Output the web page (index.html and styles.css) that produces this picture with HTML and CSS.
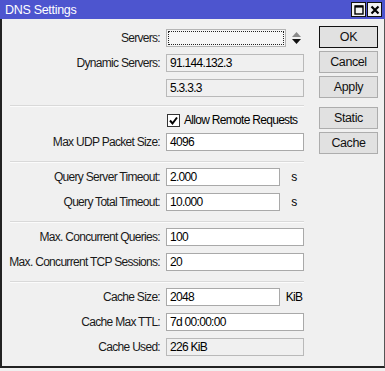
FILE: index.html
```html
<!DOCTYPE html>
<html lang="en">
<head>
    <meta charset="UTF-8">
    <title>DNS Settings</title>
    <link rel="stylesheet" href="styles.css">
</head>
<body>
    <div class="window">
        <div class="titlebar">
            <span class="title">DNS Settings</span>
            <div class="winbtns">
                <span class="winbtn">
                    <svg width="10" height="10" viewBox="0 0 10 10"><rect x="1" y="1" width="8" height="8" fill="none" stroke="#000" stroke-width="1.4"/><line x1="1" y1="1.6" x2="9" y2="1.6" stroke="#000" stroke-width="2"/></svg>
                </span>
                <span class="winbtn">
                    <svg width="10" height="10" viewBox="0 0 10 10"><path d="M1.5 1.5 L8.5 8.5 M8.5 1.5 L1.5 8.5" stroke="#000" stroke-width="2.2"/></svg>
                </span>
            </div>
        </div>

        <div class="frame">
            <div class="form">
                <div class="section">
                    <div class="row">
                        <label>Servers:</label>
                        <div class="field">
                            <div class="select"><div class="focus"></div></div>
                            <svg class="spin" width="11" height="15" viewBox="0 0 11 15"><path d="M5.5 1 L10 6 L1 6 Z" fill="#8a8a8a"/><path d="M1 8 L10 8 L5.5 13 Z" fill="#111"/></svg>
                        </div>
                    </div>
                    <div class="row">
                        <label>Dynamic Servers:</label>
                        <div class="field"><div class="input disabled">91.144.132.3</div></div>
                    </div>
                    <div class="row">
                        <label></label>
                        <div class="field"><div class="input disabled">5.3.3.3</div></div>
                    </div>
                </div>

                <div class="sep first"></div>

                <div class="section">
                    <div class="row short">
                        <label></label>
                        <div class="field check">
                            <svg class="box" width="13" height="13" viewBox="0 0 13 13"><rect x="0.5" y="0.5" width="12" height="12" fill="#fff" stroke="#333"/><path d="M3 6.5 L5.5 9.5 L10 3.5" fill="none" stroke="#000" stroke-width="2"/></svg>
                            <span>Allow Remote Requests</span>
                        </div>
                    </div>
                    <div class="row">
                        <label>Max UDP Packet Size:</label>
                        <div class="field"><div class="input">4096</div></div>
                    </div>
                </div>

                <div class="sep"></div>

                <div class="section">
                    <div class="row">
                        <label>Query Server Timeout:</label>
                        <div class="field"><div class="input narrow">2.000</div><span class="unit">s</span></div>
                    </div>
                    <div class="row">
                        <label>Query Total Timeout:</label>
                        <div class="field"><div class="input narrow">10.000</div><span class="unit">s</span></div>
                    </div>
                </div>

                <div class="sep"></div>

                <div class="section">
                    <div class="row">
                        <label>Max. Concurrent Queries:</label>
                        <div class="field"><div class="input">100</div></div>
                    </div>
                    <div class="row">
                        <label>Max. Concurrent TCP Sessions:</label>
                        <div class="field"><div class="input">20</div></div>
                    </div>
                </div>

                <div class="sep"></div>

                <div class="section">
                    <div class="row">
                        <label>Cache Size:</label>
                        <div class="field"><div class="input narrow">2048</div><span class="unit">KiB</span></div>
                    </div>
                    <div class="row">
                        <label>Cache Max TTL:</label>
                        <div class="field"><div class="input">7d 00:00:00</div></div>
                    </div>
                    <div class="row">
                        <label>Cache Used:</label>
                        <div class="field"><div class="input disabled">226 KiB</div></div>
                    </div>
                </div>
            </div>

            <div class="buttons">
                <div class="group">
                    <button class="default">OK</button>
                    <button>Cancel</button>
                    <button>Apply</button>
                </div>
                <div class="group">
                    <button>Static</button>
                    <button>Cache</button>
                </div>
            </div>
        </div>
    </div>
</body>
</html>
```

FILE: styles.css
```css
html, body {
    margin: 0;
    background: #f0f0f0;
}
body {
    font-family: "Liberation Sans", Arial, sans-serif;
    font-size: 12px;
    letter-spacing: -0.7px;
    color: #000;
}
.window {
    width: 385px;
    height: 368px;
    display: flex;
    flex-direction: column;
}
.titlebar {
    height: 19px;
    background: #4d55cf;
    display: flex;
    align-items: center;
    justify-content: space-between;
    padding: 0 3px 0 5px;
    flex-shrink: 0;
}
.title {
    color: #fff;
    font-size: 12.5px;
    letter-spacing: -0.3px;
    padding-top: 1px;
}
.winbtns {
    display: flex;
    gap: 1px;
}
.winbtn {
    width: 13px;
    height: 13px;
    background: #f2f2f2;
    border: 1px solid #111;
    display: flex;
    align-items: center;
    justify-content: center;
}
.frame {
    flex: 1;
    display: flex;
    border-left: 2px solid #222;
    border-bottom: 2px solid #222;
    border-right: 1px solid #555;
}
.form {
    padding-top: 10px;
    width: 302px;
}
.section {
    display: flex;
    flex-direction: column;
    gap: 7px;
}
.row {
    display: grid;
    grid-template-columns: 158px 138px;
    column-gap: 6px;
    height: 18px;
    align-items: center;
}
.row.short {
    height: 13px;
}
.row label {
    text-align: right;
    white-space: nowrap;
    color: #1a1a1a;
}
.field {
    display: flex;
    align-items: center;
    height: 100%;
    white-space: nowrap;
}
.input {
    box-sizing: border-box;
    width: 138px;
    height: 18px;
    line-height: 16px;
    padding-left: 3px;
    background: #fff;
    border: 1px solid #a9a9a9;
    white-space: nowrap;
}
.input.narrow {
    width: 114px;
}
.input.disabled {
    background: #f0f0f0;
    border-color: #b9b9b9;
}
.unit {
    flex: 1;
    text-align: center;
    padding-left: 4px;
}
.select {
    box-sizing: border-box;
    width: 120px;
    height: 18px;
    border: 1px solid #b4b4b4;
    background: #f6f6f6;
    padding: 1px;
}
.focus {
    height: 100%;
    box-sizing: border-box;
    border: 1px dotted #222;
}
.spin {
    margin-left: 5px;
}
.check {
    gap: 4px;
    padding-left: 1px;
}
.sep {
    height: 1px;
    background: #d9d9d9;
    border-bottom: 1px solid #fbfbfb;
    margin: 10px 0 5px 8px;
}
.sep.first {
    margin-top: 8px;
    margin-bottom: 6px;
}
.buttons {
    padding: 7px 0 0 15px;
    display: flex;
    flex-direction: column;
    gap: 9px;
}
.group {
    display: flex;
    flex-direction: column;
    gap: 3px;
}
button {
    width: 59px;
    height: 22px;
    padding: 0;
    background: #e1e1e1;
    border: 1px solid #adadad;
    font-family: inherit;
    font-size: 12.5px;
    letter-spacing: -0.4px;
    color: #111;
}
button.default {
    border: 1px solid #111;
    box-shadow: inset 0 0 0 1px #e1e1e1;
}
```
